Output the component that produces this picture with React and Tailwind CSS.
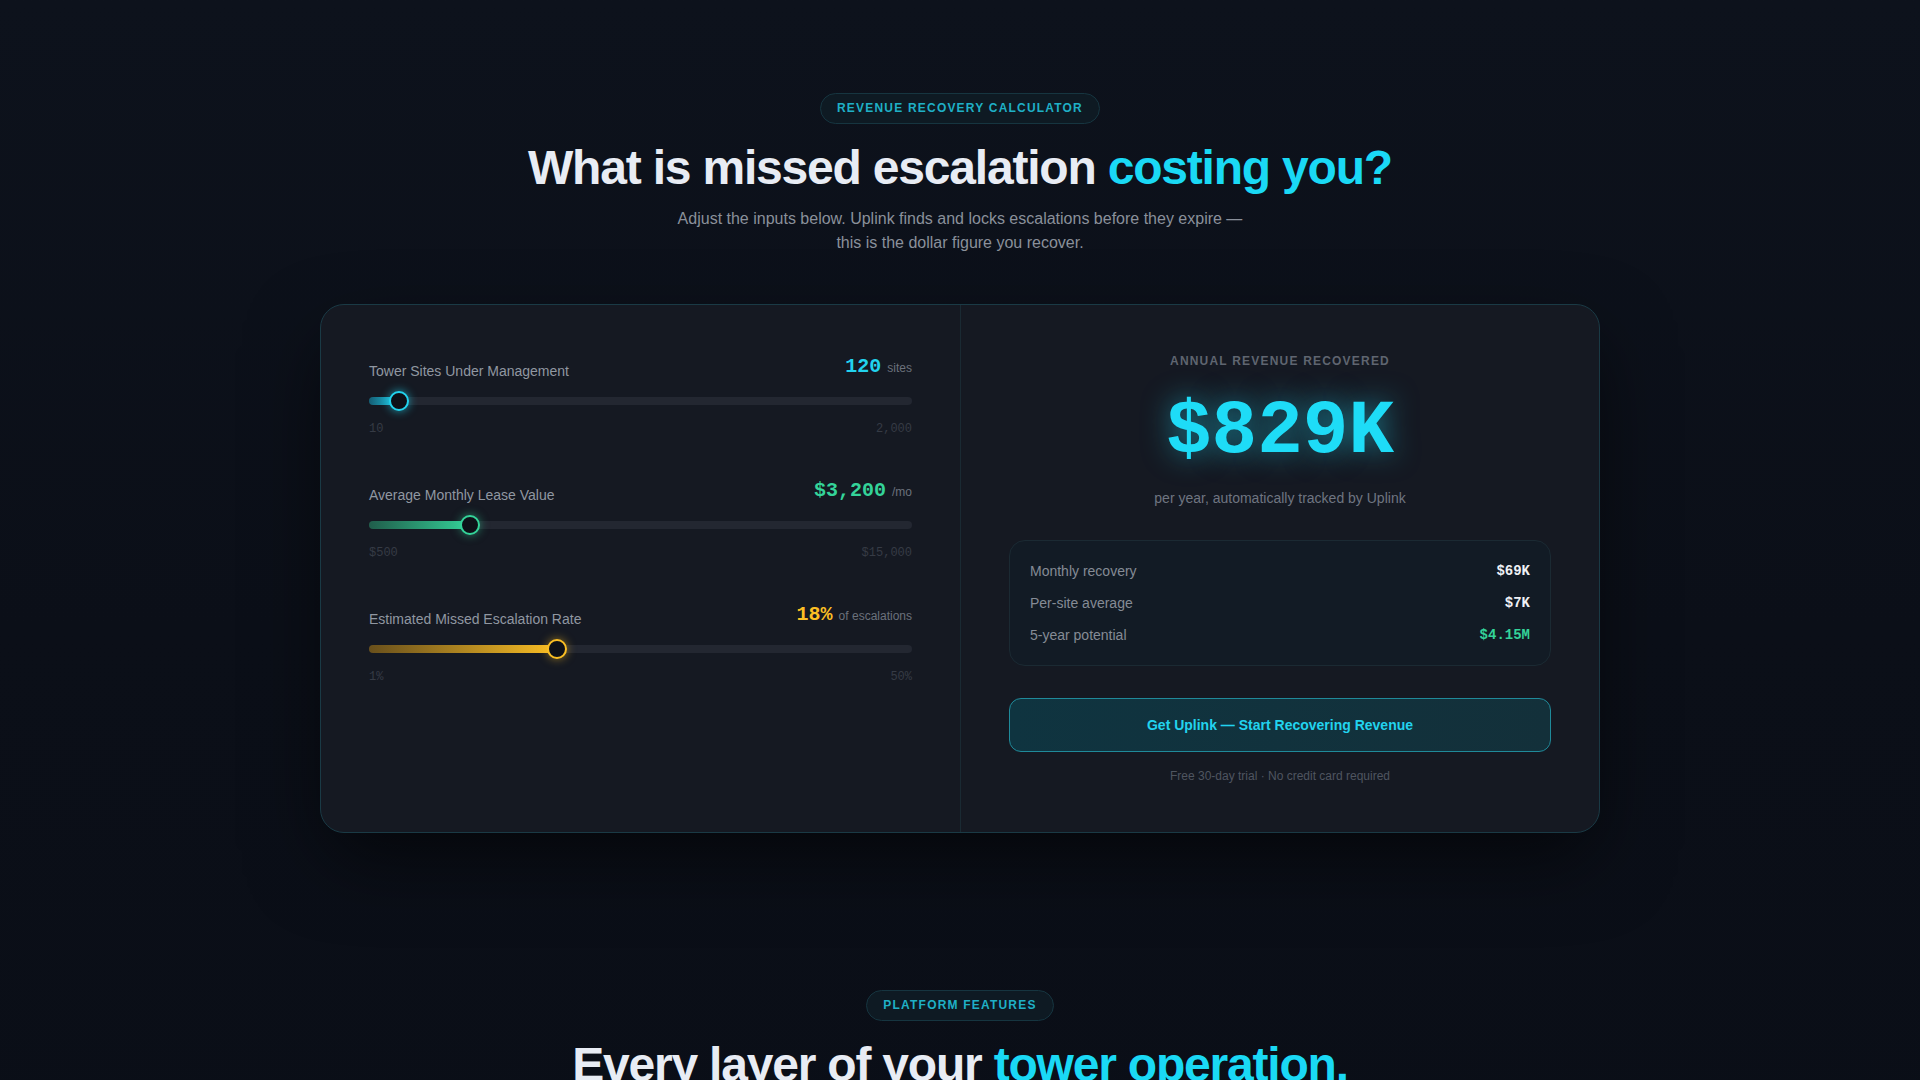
import React from "react";

const sliders = [
  {
    label: "Tower Sites Under Management",
    value: "120",
    unit: "sites",
    pct: 5.53,
    min: "10",
    max: "2,000",
    text: "text-[#22d3ee]",
    fill: "bg-gradient-to-r from-[#0e7490]/70 to-[#22d3ee]",
    thumb: "border-[#22d3ee] shadow-[0_0_10px_rgba(34,211,238,0.7)]",
  },
  {
    label: "Average Monthly Lease Value",
    value: "$3,200",
    unit: "/mo",
    pct: 18.62,
    min: "$500",
    max: "$15,000",
    text: "text-[#34d399]",
    fill: "bg-gradient-to-r from-[#1f6b52]/80 to-[#34d399]",
    thumb: "border-[#34d399] shadow-[0_0_10px_rgba(52,211,153,0.55)]",
  },
  {
    label: "Estimated Missed Escalation Rate",
    value: "18%",
    unit: "of escalations",
    pct: 34.69,
    min: "1%",
    max: "50%",
    text: "text-[#fbbf24]",
    fill: "bg-gradient-to-r from-[#7a5a16]/80 to-[#fbbf24]",
    thumb: "border-[#fbbf24] shadow-[0_0_10px_rgba(251,191,36,0.55)]",
  },
];

function Slider({ s }) {
  return (
    <div>
      <div className="mb-4 flex items-end justify-between">
        <span className="text-sm leading-5 text-[#9097a1]">{s.label}</span>
        <span className="flex items-baseline gap-1.5">
          <span className={`font-mono text-xl font-bold leading-7 ${s.text}`}>{s.value}</span>
          <span className="text-xs text-[#6b717c]">{s.unit}</span>
        </span>
      </div>
      <div className="relative h-2 rounded-full bg-[#232731]">
        <div className={`absolute inset-y-0 left-0 rounded-full ${s.fill}`} style={{ width: s.pct + "%" }} />
        <div
          className={`absolute top-1/2 h-5 w-5 -translate-x-1/2 -translate-y-1/2 rounded-full border-2 bg-[#0e1118] ${s.thumb}`}
          style={{ left: s.pct + "%" }}
        />
      </div>
      <div className="mt-4 flex justify-between font-mono text-xs text-[#363b45]">
        <span>{s.min}</span>
        <span>{s.max}</span>
      </div>
    </div>
  );
}

function Badge({ children }) {
  return (
    <span className="inline-block rounded-full border border-[#163540] bg-[#0e1a23] px-4 py-1.5 text-xs font-bold uppercase leading-[17px] tracking-widest text-[#1fb0c6]">
      {children}
    </span>
  );
}

export default function App() {
  return (
    <div
      className="min-h-screen bg-gradient-to-b from-[#0d121c] via-[#0b0f18] to-[#0a0e17] text-[#e8ecf4]"
      style={{ fontFamily: '"Liberation Sans", Arial, sans-serif' }}
    >
      <style>{`.font-mono{font-family:"Liberation Mono","Courier New",monospace;}`}</style>
      <section className="px-6 pb-24 pt-[93px]">
        <div className="flex flex-col items-center text-center">
          <Badge>Revenue Recovery Calculator</Badge>
          <h2 className="mt-4 text-5xl font-bold leading-[1.15] tracking-tight text-[#e8ecf4]">
            What is missed escalation <span className="text-[#1ad9f5]">costing you?</span>
          </h2>
          <p className="mt-3 max-w-xl text-base leading-6 text-[#8a909a]">
            Adjust the inputs below. Uplink finds and locks escalations before they expire — this is the dollar figure you recover.
          </p>
        </div>

        <div className="mx-auto mt-[49px] grid max-w-7xl grid-cols-2 overflow-hidden rounded-3xl border border-[#1a3a45] bg-[#151922] shadow-[0_30px_80px_-10px_rgba(0,0,0,0.6)]">
          <div className="space-y-10 p-12">
            {sliders.map((s) => (
              <Slider key={s.label} s={s} />
            ))}
          </div>
          <div className="flex flex-col items-stretch border-l border-[#1a2a33] p-12 text-center">
            <div className="text-xs font-bold uppercase leading-4 tracking-widest text-[#5f6570]">
              Annual Revenue Recovered
            </div>
            <div className="mt-[25px] font-mono text-[76px] font-bold leading-none text-[#1edcf7] [text-shadow:0_0_28px_rgba(34,211,238,0.55)]">
              $829K
            </div>
            <div className="mt-[18px] text-sm text-[#6f7581]">per year, automatically tracked by Uplink</div>

            <div className="mt-8 space-y-3 rounded-2xl border border-[#1b2a33] bg-[#121b25] p-5 text-sm">
              <div className="flex items-center justify-between">
                <span className="text-[#858b95]">Monthly recovery</span>
                <span className="font-mono font-bold text-[#eef1f5]">$69K</span>
              </div>
              <div className="flex items-center justify-between">
                <span className="text-[#858b95]">Per-site average</span>
                <span className="font-mono font-bold text-[#eef1f5]">$7K</span>
              </div>
              <div className="flex items-center justify-between">
                <span className="text-[#858b95]">5-year potential</span>
                <span className="font-mono font-bold text-[#34d399]">$4.15M</span>
              </div>
            </div>

            <button className="mt-8 rounded-xl border border-[#1f8a9a] bg-gradient-to-r from-[#0f3440] to-[#13303a] py-4 text-sm font-bold leading-5 text-[#22d3ee]">
              Get Uplink — Start Recovering Revenue
            </button>
            <div className="mt-4 text-xs leading-4 text-[#4f5560]">Free 30-day trial · No credit card required</div>
          </div>
        </div>
      </section>

      <section className="px-6 pb-24 pt-[61px]">
        <div className="flex flex-col items-center text-center">
          <Badge>Platform Features</Badge>
          <h2 className="mt-4 text-5xl font-bold leading-[1.15] tracking-tight text-[#e8ecf4]">
            Every layer of your <span className="text-[#1ad9f5]">tower operation.</span>
          </h2>
          <p className="mt-3 max-w-xl text-base leading-6 text-[#8a909a]">
            From lease escalations to site compliance, Uplink keeps every tower in your portfolio accounted for.
          </p>
        </div>
      </section>
    </div>
  );
}
